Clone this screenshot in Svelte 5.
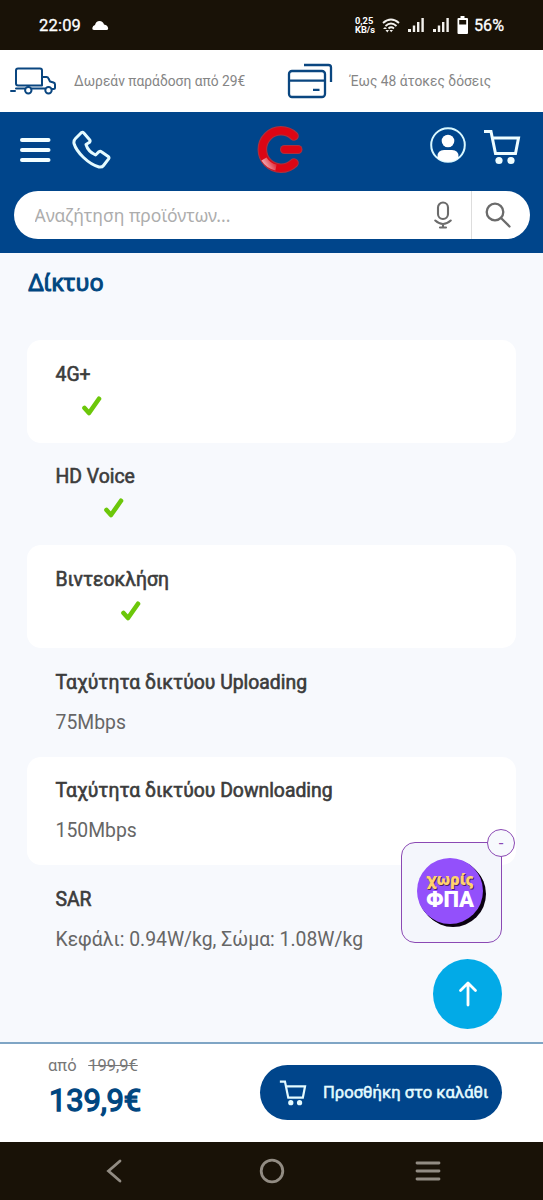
<script>
	const specs = [
		{ name: '4G+', check: true },
		{ name: 'HD Voice', check: true },
		{ name: 'Βιντεοκλήση', check: true },
		{ name: 'Ταχύτητα δικτύου Uploading', value: '75Mbps' },
		{ name: 'Ταχύτητα δικτύου Downloading', value: '150Mbps' },
		{ name: 'SAR', value: 'Κεφάλι: 0.94W/kg, Σώμα: 1.08W/kg' }
	]

	let promoOpen = true
	let query = ''
</script>

<div class="screen">
	<div class="status">
		<span class="time">22:09</span>
		<svg class="cloud" width="17" height="11" viewBox="0 0 17 11"><path fill="#fff" d="M2 10Q0 10 0.300 8Q0.800 5.500 3 5Q4 1 7.500 1Q11 1 12 4.500Q15.800 5 16.200 8.500Q16 10 14.500 10Z" /></svg>
		<span class="speed">0,25<br />KB/s</span>
		<svg class="wifi" width="18" height="15" viewBox="0 0 18 15" fill="none" stroke="#f4f2ee" stroke-width="1.900">
			<path d="M1 5Q9-2 17 5M3.500 8Q9 3.200 14.500 8M6.500 10.500Q9 8.200 12 10.500" />
			<path d="M7.500 12L9.200 14.200L11 12Z" fill="#f4f2ee" stroke="none" />
			<path d="M1 11L3 9L5 11ZM3.500 12L5.300 14.500L7 12Z" fill="#f4f2ee" stroke="none" />
		</svg>
		<svg class="signal" width="17" height="16" viewBox="0 0 17 16" fill="#f4f2ee"><path d="M0 12h3v3H0zM4.800 8.500h2.400V15H4.800zM9 5h2.400v10H9zM13.400 1h2.400v14h-2.400z" /></svg>
		<svg class="signal" width="17" height="16" viewBox="0 0 17 16" fill="#f4f2ee"><path d="M0 12h3v3H0zM4.800 8.500h2.400V15H4.800zM9 5h2.400v10H9zM13.400 1h2.400v14h-2.400z" /></svg>
		<svg class="battery" width="12" height="19" viewBox="0 0 12 19"><path fill="#fff" fill-rule="evenodd" d="M3.500 0h4v2H10a1 1 0 0 1 1 1v14a1 1 0 0 1-1 1H1.500a1 1 0 0 1-1-1V3a1 1 0 0 1 1-1h2zM2.200 4v4.500h7V4z" /></svg>
		<span class="percent">56%</span>
	</div>

	<div class="perks">
		<div class="perk">
			<svg class="truck" width="48" height="28" viewBox="0 0 48 28" fill="none" stroke="#0a4680" stroke-width="2" stroke-linecap="round" stroke-linejoin="round">
				<path d="M6 14.500V3.500A2 2 0 0 1 8 1.500H30A2 2 0 0 1 32 3.500V18.500H8A2 2 0 0 1 6 16.500Z" />
				<path d="M32 10H36.500Q38 10 38.500 11.500L40 14.500L43.500 15.500Q45 16 45 17.500V20.500A1.500 1.500 0 0 1 43.500 22H42M35 21.500H21.500M15 21.500H6M5 24H1" />
				<circle cx="18.300" cy="23.300" r="3.200" /><circle cx="38.500" cy="23.300" r="3.200" />
			</svg>
			<span>Δωρεάν παράδοση από 29€</span>
		</div>
		<div class="perk second">
			<svg class="cards" width="46" height="36" viewBox="0 0 46 36" fill="none" stroke="#0a4680" stroke-width="2.300">
				<rect x="2" y="8" width="36" height="26" rx="3" />
				<path d="M2 17.700H38M26 26.800H32.500M17 2H41.500A2.500 2.500 0 0 1 44 4.500V19" />
			</svg>
			<span>Έως 48 άτοκες δόσεις</span>
		</div>
	</div>

	<header>
		<div class="top">
			<svg class="burger" width="32" height="26" viewBox="0 0 32 26" stroke="#f3feff" stroke-width="4" stroke-linecap="round"><path d="M3 3H29.500M3 13H29.500M3 23H29.500" /></svg>
			<svg class="phone" width="39" height="40" viewBox="0 0 39 40" fill="none" stroke="#e4fbff" stroke-width="3" stroke-linejoin="round">
				<path d="M9.500 2.500Q10.700 1.800 11.800 3L17.600 9.800Q18.600 11 17.600 12.200L14 14.500Q16 21.500 23.600 25L27 21.700Q28.200 20.800 29.400 21.700L36.200 26.500Q37.500 27.600 36.600 28.900L31.500 35.500Q30 37.500 27 37C16 33.800 4.500 22 2 13.500Q1.500 10.500 3.500 8.500Z" />
			</svg>
			<svg class="logo" width="48" height="49" viewBox="0 0 48 49" fill="none" stroke-linecap="round">
				<defs>
					<linearGradient id="shine" x1="7" y1="42" x2="20" y2="34" gradientUnits="userSpaceOnUse">
						<stop offset="0" stop-color="#f3c3cc" /><stop offset="1" stop-color="#dc0614" />
					</linearGradient>
				</defs>
				<path d="M38 11A18.700 18.700 0 1 0 38 38" stroke="#a9323f" stroke-width="9.600" />
				<path d="M38 11A18.700 18.700 0 1 0 38 38" stroke="#dc0614" stroke-width="7.400" />
				<path d="M8 34A18.700 18.700 0 0 0 20 42.500" stroke="url(#shine)" stroke-width="6" stroke-linecap="butt" />
				<path d="M28.500 24.500H42" stroke="#a9323f" stroke-width="9" />
				<path d="M28.500 24.500H42" stroke="#dc0614" stroke-width="6.800" />
			</svg>
			<svg class="user" width="36" height="36" viewBox="0 0 36 36">
				<circle cx="18" cy="18" r="16.800" fill="none" stroke="#d9f8ff" stroke-width="2" />
				<circle cx="18" cy="14" r="6.300" fill="#fff" />
				<path d="M7.500 31V29.500Q7.500 23 14 23H22Q28.500 23 28.500 29.500V31Q18 38.500 7.500 31Z" fill="#fff" />
			</svg>
			<svg class="cart" width="38" height="37" viewBox="0 0 38 37" fill="none" stroke="#eefdff" stroke-width="3">
				<path d="M1 3.500H8L12.500 25.500H32.500L35.500 10H9.500" />
				<circle cx="16" cy="32.500" r="3.600" fill="#eefdff" stroke="none" /><circle cx="28" cy="32.500" r="3.600" fill="#eefdff" stroke="none" />
			</svg>
		</div>
		<form class="search" on:submit|preventDefault>
			<input type="text" placeholder="Αναζήτηση προϊόντων..." bind:value={query} />
			<button type="button" class="mic" aria-label="mic">
				<svg width="18" height="28" viewBox="0 0 18 28" fill="none" stroke="#6b6b6b" stroke-width="2.100" stroke-linecap="round"><rect x="4" y="1.500" width="10" height="16.500" rx="5" /><path d="M1.300 19.500Q9 26.500 16.700 19.500M9 23V26.500M6 26.500H12" /></svg>
			</button>
			<button type="submit" aria-label="search">
				<svg width="26" height="26" viewBox="0 0 26 26" fill="none" stroke="#6b6b6b" stroke-width="2.300" stroke-linecap="round"><circle cx="10" cy="10" r="8.300" /><path d="M16 16L24.500 24.500" /></svg>
			</button>
		</form>
	</header>

	<main>
		<h2>Δίκτυο</h2>
		{#each specs as spec}
			<section class:short={spec.check}>
				<div class="label">
					<h3>{spec.name}</h3>
					{#if spec.check}
						<svg class="check" width="20" height="20" viewBox="0 0 20 20" fill="none" stroke="#6cc70a" stroke-width="4.600" stroke-linecap="round" stroke-linejoin="round"><path d="M2.500 12L7 17L17 2.800" /></svg>
					{/if}
				</div>
				{#if spec.value}
					<p>{spec.value}</p>
				{/if}
			</section>
		{/each}

		{#if promoOpen}
			<div class="promo">
				<div class="badge"><span class="without">χωρίς</span><span class="vat">ΦΠΑ</span></div>
				<button type="button" class="close" on:click={() => promoOpen = false}>-</button>
			</div>
		{/if}
		<button type="button" class="to-top" aria-label="top">
			<svg width="20" height="26" viewBox="0 0 20 26" fill="none" stroke="#fff" stroke-width="2.800" stroke-linecap="round" stroke-linejoin="round"><path d="M10 24V2.500M2.500 9.500L10 2L17.500 9.500" /></svg>
		</button>
	</main>

	<div class="buy">
		<div class="price">
			<div class="from">από <s>199,9€</s></div>
			<strong>139,9€</strong>
		</div>
		<button type="button" class="add">
			<svg width="28" height="27" viewBox="0 0 38 37" fill="none" stroke="#e4fbff" stroke-width="3">
				<path d="M1 3.500H8L12.500 25.500H32.500L35.500 10H9.500" />
				<circle cx="16" cy="32.500" r="3.600" fill="#e4fbff" stroke="none" /><circle cx="28" cy="32.500" r="3.600" fill="#e4fbff" stroke="none" />
			</svg>
			<span>Προσθήκη στο καλάθι</span>
		</button>
	</div>

	<nav>
		<svg width="16" height="24" viewBox="0 0 16 24"><path d="M14 2L2.500 12L14 22" /></svg>
		<svg class="home" width="26" height="26" viewBox="0 0 26 26"><circle cx="13" cy="13" r="10.800" /></svg>
		<svg width="26" height="20" viewBox="0 0 26 20"><path d="M2 2H24M2 10H24M2 18H24" /></svg>
	</nav>
</div>

<style>
	:global(body) {
		background: #f7f9fd;
	}
	.screen {
		display: flex;
		flex-direction: column;
		width: 543px;
		height: 1200px;
		overflow: hidden;
		font-family: Roboto, "Liberation Sans", sans-serif;
		color: #666;
	}
	svg {
		display: block;
		flex: none;
	}
	button {
		font: inherit;
		border: none;
		padding: 0;
		background: none;
	}

	.status {
		display: flex;
		align-items: center;
		height: 50px;
		box-sizing: border-box;
		padding-left: 39px;
		background: #191207;
		color: #fff;
		font-size: 16.5px;
		white-space: nowrap;
		-webkit-text-stroke: 0.3px #fff;
	}
	.time {
		width: 53px;
		letter-spacing: 0.2px;
	}
	.speed {
		width: 27px;
		margin-left: 246px;
		font-size: 9.3px;
		line-height: 9.5px;
		font-weight: 700;
		-webkit-text-stroke: 0;
	}
	.signal {
		margin-left: 8px;
	}
	.battery {
		margin: 0 5px 0 7px;
	}
	.percent {
		font-size: 16.2px;
	}

	.perks {
		display: flex;
		height: 62px;
		background: #fff;
		font-size: 13.800px;
		color: #858585;
		white-space: nowrap;
	}
	.perk {
		display: flex;
		align-items: center;
		gap: 16px;
		width: 277px;
		padding-left: 10px;
		flex: none;
	}
	.perk.second {
		gap: 17px;
		width: 255px;
		padding-left: 0;
	}

	header {
		height: 141px;
		background: #00458b;
	}
	.top {
		display: flex;
		align-items: center;
		height: 75px;
	}
	.burger {
		margin-left: 19px;
	}
	.phone {
		margin-left: 21px;
	}
	.logo {
		margin-left: 145px;
	}
	.user {
		margin: -10px 0 0 126px;
	}
	.cart {
		margin: -6px 0 0 17px;
	}
	.search {
		display: flex;
		height: 48px;
		margin: 4px 13px 0 14px;
		border-radius: 24px;
		background: #fff;
	}
	input {
		flex: 1;
		min-width: 0;
		border: none;
		outline: none;
		background: none;
		padding: 0 0 1px 20.500px;
		font: 17.500px "Noto Sans", sans-serif;
	}
	input::placeholder {
		color: #adadad;
		opacity: 1;
	}
	.search button {
		display: flex;
		align-items: center;
		justify-content: center;
		width: 58px;
		padding-right: 6px;
		box-sizing: border-box;
	}
	.search .mic {
		width: 57px;
		padding: 0;
		border-right: 1px solid #ddd;
	}

	main {
		position: relative;
		height: 789px;
		background: #f7f9fd;
	}
	h2 {
		margin: 0;
		height: 87px;
		padding: 12px 0 0 28.500px;
		box-sizing: border-box;
		font: 400 23.500px/34px "Noto Sans", sans-serif;
		color: #004680;
		-webkit-text-stroke: 1px #004680;
	}
	section {
		height: 108.600px;
		width: 489px;
		margin-left: 27px;
		padding: 20.500px 0 0 28.500px;
		box-sizing: border-box;
		border-radius: 14px;
	}
	section.short {
		height: 102.700px;
	}
	section:nth-of-type(odd) {
		background: #fff;
	}
	.label {
		display: inline-block;
		vertical-align: top;
	}
	h3 {
		margin: 0;
		font-size: 19.370px;
		line-height: 28px;
		font-weight: 400;
		color: #3c3c3c;
		-webkit-text-stroke: 0.6px #3c3c3c;
	}
	.check {
		margin: 7px 0 0 calc(50% + 9px);
	}
	p {
		margin: 12px 0 0;
		font-size: 19.370px;
		line-height: 28px;
	}

	.promo {
		position: absolute;
		left: 401px;
		top: 589px;
		width: 101px;
		height: 101px;
		box-sizing: border-box;
		border: 1px solid #8b49b4;
		border-radius: 14px;
		background: #f4f6fc;
	}
	.badge {
		display: flex;
		flex-direction: column;
		align-items: center;
		width: 66px;
		height: 66px;
		margin: 15px 0 0 15px;
		padding-top: 12px;
		box-sizing: border-box;
		border-radius: 50%;
		background: #9350fb;
		box-shadow: 1px 1px #0c0312, 2px 2px #0c0312, 3px 3px #0c0312;
		font-weight: 900;
	}
	.without {
		font-family: "Noto Sans", sans-serif;
		font-size: 15px;
		line-height: 18px;
		color: #ffd36f;
		text-shadow: 1px 1px #4b2464;
	}
	.vat {
		font-size: 22px;
		line-height: 23px;
		color: #fff;
	}
	.close {
		position: absolute;
		right: -14px;
		top: -14px;
		width: 28px;
		height: 28px;
		box-sizing: border-box;
		border: 1px solid #8b49b4;
		border-radius: 50%;
		background: #f7f9fd;
		color: #8b49b4;
		font-size: 17px;
		line-height: 20px;
	}
	.to-top {
		position: absolute;
		left: 433px;
		top: 706px;
		display: grid;
		place-items: center;
		width: 69px;
		height: 70px;
		border-radius: 50%;
		background: #02aae7;
	}

	.buy {
		display: flex;
		height: 100px;
		box-sizing: border-box;
		border-top: 2px solid #7fa5c5;
		background: #fff;
	}
	.price {
		width: 212px;
		padding: 11px 0 0 48px;
		box-sizing: border-box;
		width: 260px;
		color: #777;
	}
	.from {
		font-size: 16.500px;
		line-height: 21px;
	}
	s {
		margin-left: 7.500px;
	}
	strong {
		display: block;
		margin: 7px 0 0 1px;
		font-size: 31px;
		line-height: 36px;
		font-weight: 400;
		letter-spacing: -0.200px;
		color: #004680;
		-webkit-text-stroke: 1.300px #004680;
	}
	.add {
		display: flex;
		align-items: center;
		gap: 16px;
		width: 242px;
		height: 55px;
		margin-top: 21px;
		padding-left: 19px;
		border-radius: 28px;
		background: #00458b;
		color: #e4fbff;
		font-size: 16.600px;
		white-space: nowrap;
		-webkit-text-stroke: 0.5px #e4fbff;
	}
	.add span {
		padding-bottom: 1px;
	}

	nav {
		display: flex;
		align-items: center;
		height: 58px;
		padding-left: 106px;
		background: #191207;
		fill: none;
		stroke: #928c83;
		stroke-width: 2.800;
		stroke-linecap: round;
	}
	.home {
		margin: 0 130px 0 137px;
	}
</style>
